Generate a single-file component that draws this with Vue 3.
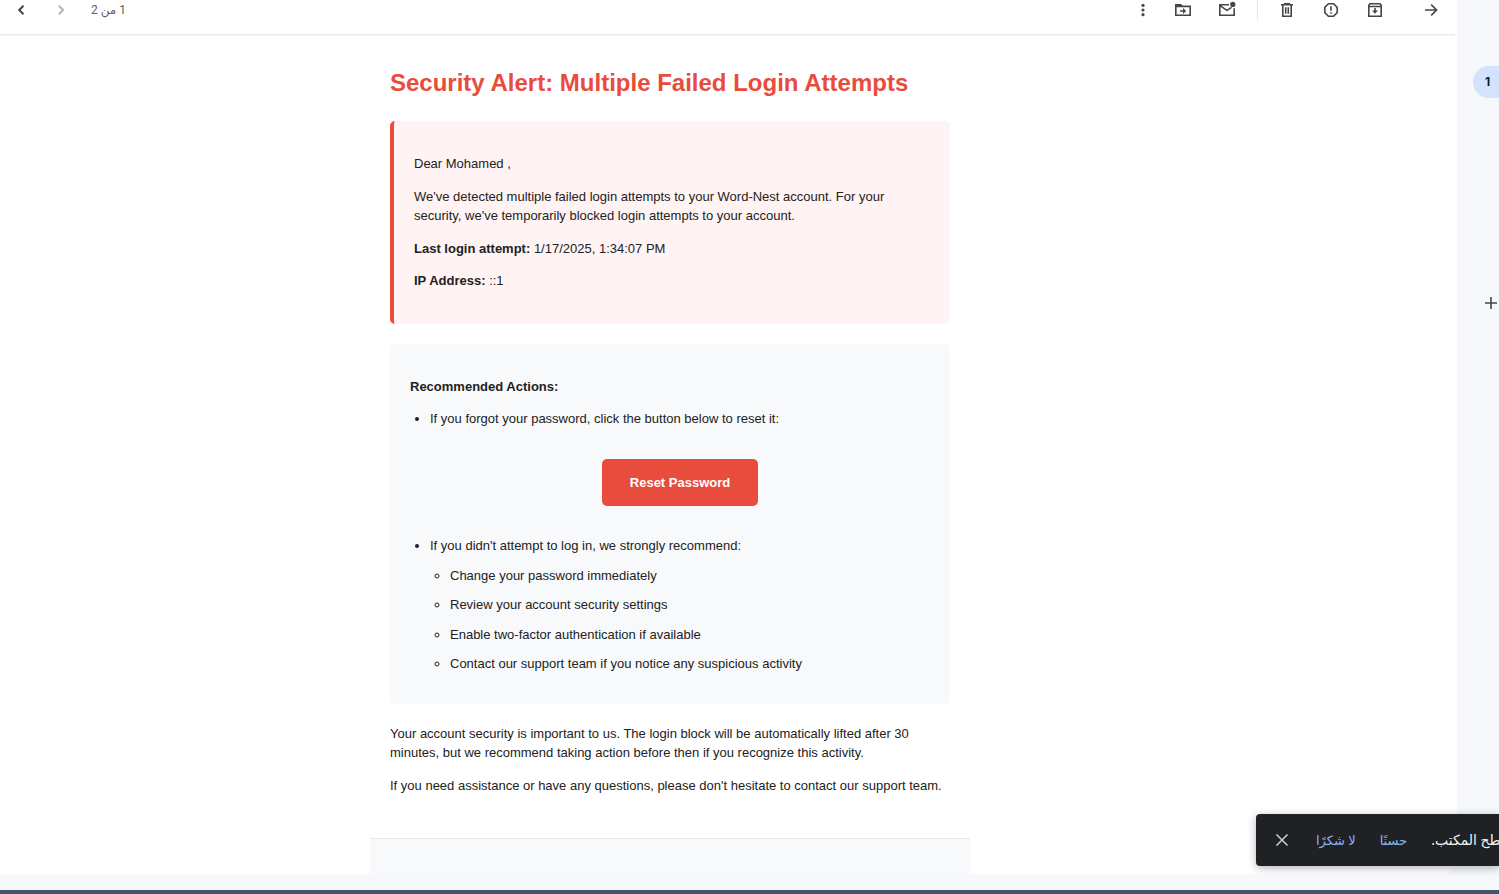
<script setup>
const steps = [
  'Change your password immediately',
  'Review your account security settings',
  'Enable two-factor authentication if available',
  'Contact our support team if you notice any suspicious activity',
]
</script>

<template>
  <div class="app">
    <div class="workspace">
      <main class="panel">
        <header class="toolbar">
          <nav class="pager">
            <button type="button" aria-label="Newer">
              <svg viewBox="0 0 20 20"><path class="line bold" d="M12.5 5.7 8.2 10l4.3 4.3" /></svg>
            </button>
            <button type="button" aria-label="Older" disabled>
              <svg viewBox="0 0 20 20"><path class="line bold" d="M7.8 5.7 12.1 10l-4.3 4.3" /></svg>
            </button>
            <span class="count" dir="rtl">1 من 2</span>
          </nav>
          <div class="actions">
            <button type="button" class="narrow" aria-label="More">
              <svg viewBox="0 0 20 20"><circle cx="10" cy="5.3" r="1.6" /><circle cx="10" cy="10" r="1.6" /><circle cx="10" cy="14.7" r="1.6" /></svg>
            </button>
            <button type="button" aria-label="Move to">
              <svg viewBox="0 0 20 20"><path class="line" d="M2.8 4.8h5l1.6 1.6h7.8v8.8H2.8z" /><path d="M2.5 4.5h5.2l1.8 2.7h-7z" /><path d="M7 10.2h3V8l3.2 3-3.2 3v-2.2H7z" /></svg>
            </button>
            <button type="button" aria-label="Mark as unread">
              <svg viewBox="0 0 20 20"><path class="line" d="M12 4.8H2.8v10.4h14.4V8.3M3 5.7l7 4.6 4.6-3" /><circle cx="15.8" cy="4.4" r="2.6" /></svg>
            </button>
            <span class="divider"></span>
            <button type="button" aria-label="Delete">
              <svg viewBox="0 0 20 20"><path class="line" d="M4 4.8h12M7.8 4V3.8h4.4V4M5.8 5v11.2h8.4V5M8.7 7.2v6.6M11.3 7.2v6.6" /></svg>
            </button>
            <button type="button" aria-label="Report spam">
              <svg viewBox="0 0 20 20"><path class="line" d="M7.4 3.8h5.2l3.6 3.6v5.2l-3.6 3.6H7.4l-3.6-3.6V7.4z" /><path class="line" d="M10 6.2v4.6M10 12.3v1.5" /></svg>
            </button>
            <button type="button" aria-label="Archive">
              <svg viewBox="0 0 20 20"><path class="line" d="M5 3.8h10l1.2 1.5v10.9H3.8V5.3zM3.8 6.5h12.4" /><path d="M9.2 8h1.6v2.5H13l-3 3.2-3-3.2h2.2z" /></svg>
            </button>
            <button type="button" class="reply" aria-label="Back to inbox">
              <svg viewBox="0 0 20 20"><path class="line" d="M4 10h11M10.2 4.6l5.4 5.4-5.4 5.4" /></svg>
            </button>
          </div>
        </header>

        <div class="reader">
          <article class="mail">
            <div class="content">
              <h1>Security Alert: Multiple Failed Login Attempts</h1>
              <section class="alert">
                <p>Dear Mohamed ,</p>
                <p>We've detected multiple failed login attempts to your Word-Nest account. For your security, we've temporarily blocked login attempts to your account.</p>
                <p><strong>Last login attempt:</strong> 1/17/2025, 1:34:07 PM</p>
                <p><strong>IP Address:</strong> ::1</p>
              </section>
              <section class="advice">
                <p><strong>Recommended Actions:</strong></p>
                <ul>
                  <li>
                    If you forgot your password, click the button below to reset it:
                    <div class="cta"><a href="#reset">Reset Password</a></div>
                  </li>
                  <li>
                    If you didn't attempt to log in, we strongly recommend:
                    <ul>
                      <li v-for="step in steps" :key="step">{{ step }}</li>
                    </ul>
                  </li>
                </ul>
              </section>
              <p>Your account security is important to us. The login block will be automatically lifted after 30 minutes, but we recommend taking action before then if you recognize this activity.</p>
              <p>If you need assistance or have any questions, please don't hesitate to contact our support team.</p>
            </div>
            <footer class="mail-footer"></footer>
          </article>
        </div>
      </main>

      <aside class="rail">
        <span class="badge">1</span>
        <button type="button" class="add" aria-label="Add">
          <svg viewBox="0 0 20 20"><path class="line" d="M10 4v12M4 10h12" /></svg>
        </button>
      </aside>
    </div>

    <div class="snackbar" role="status">
      <button type="button" class="close" aria-label="Close">
        <svg viewBox="0 0 20 20"><path class="line" d="m4.5 4.5 11 11M15.5 4.5l-11 11" /></svg>
      </button>
      <button type="button" dir="rtl">لا شكرًا</button>
      <button type="button" dir="rtl">حسنًا</button>
      <span class="message" dir="rtl">سطح المكتب.</span>
    </div>
  </div>
</template>

<style>
body {
  margin: 0;
  background: #f6f8fc;
}
</style>

<style scoped>
.app {
  position: relative;
  display: flex;
  flex-direction: column;
  box-sizing: border-box;
  height: 100vh;
  padding-bottom: 16px;
  border-bottom: 4px solid #44546a;
  overflow: hidden;
  background: #f6f8fc;
  color: #222;
  font: 13px/1.5 "Liberation Sans", Arial, sans-serif;
}
.workspace {
  display: flex;
  flex: 1;
  min-height: 0;
}
.panel {
  display: flex;
  flex: 1;
  flex-direction: column;
  min-width: 0;
  background: #fff;
  border-bottom-right-radius: 16px;
  overflow: hidden;
}
button {
  display: flex;
  align-items: center;
  justify-content: center;
  padding: 0;
  border: 0;
  background: none;
  color: #444746;
  font: inherit;
}
svg {
  display: block;
  width: 20px;
  height: 20px;
  fill: currentColor;
}
.line {
  fill: none;
  stroke: currentColor;
  stroke-width: 1.6;
}
.bold {
  stroke-width: 2;
}
.toolbar {
  display: flex;
  flex: none;
  justify-content: space-between;
  margin-right: 2px;
  padding: 0 2px 15px 1px;
  box-shadow: inset 0 -1px 0 #e9eaeb, 0 1px 1px #f6f6f6;
}
.pager,
.actions {
  display: flex;
  align-items: center;
  height: 20px;
}
.pager button {
  width: 40px;
}
.pager button:disabled {
  color: #b4b5b5;
}
.count {
  margin-left: 10px;
  color: #5e5e5e;
  font: 12px/20px Roboto, "Noto Sans", "DejaVu Sans", sans-serif;
}
.actions button {
  width: 44px;
}
.actions .narrow {
  width: 36px;
}
.actions .reply {
  margin-left: 12px;
}
.divider {
  width: 1px;
  height: 20px;
  margin: 0 7px 0 8px;
  background: #e4e5e6;
}
.reader {
  display: grid;
  flex: 1;
  grid-template-columns: 370fr 600px 487fr;
  min-height: 0;
}
.mail {
  display: flex;
  grid-column: 2;
  flex-direction: column;
  min-height: 0;
}
.content {
  padding: 30px 20px;
}
h1 {
  margin: 0 0 20px;
  color: #e74c3c;
  font-size: 24px;
  line-height: 36px;
}
p {
  margin: 13px 0;
}
.alert,
.advice {
  display: flow-root;
  margin: 20px 0;
  padding: 20px;
  border-radius: 5px;
}
.alert {
  border-left: 4px solid #e74c3c;
  background: #fff3f3;
}
.advice {
  background: #f8f9fb;
}
ul {
  margin: 0;
  padding-left: 20px;
}
li {
  margin: 10px 0;
}
.cta {
  display: flex;
  justify-content: center;
  margin: 30px 0;
}
.cta a {
  padding: 14px 28px;
  border-radius: 5px;
  background: #e74c3c;
  color: #fff;
  font-weight: bold;
  text-decoration: none;
}
.mail-footer {
  flex: 1;
  border-top: 1px solid #e5e8ea;
  background: #f8f9fb;
}
.rail {
  display: flex;
  flex: none;
  flex-direction: column;
  align-items: flex-end;
  width: 42px;
  padding-top: 66px;
  box-sizing: border-box;
  overflow: hidden;
}
.badge {
  width: 14px;
  padding-left: 12px;
  border-radius: 16px 0 0 16px;
  background: #d3e3fd;
  color: #001d35;
  font: bold 12px/32px Inter, sans-serif;
}
.add {
  margin: 195px -2px 0 0;
}
.snackbar {
  position: absolute;
  right: 0;
  bottom: 24px;
  display: flex;
  align-items: center;
  gap: 24px;
  box-sizing: border-box;
  width: 243px;
  height: 52px;
  padding-left: 16px;
  border-radius: 4px 0 0 4px;
  background: #202124;
  box-shadow: 0 2px 8px rgba(60, 64, 67, 0.4);
  overflow: hidden;
  color: #f1f3f4;
  font: 14px/20px "Noto Sans", "DejaVu Sans", sans-serif;
  white-space: nowrap;
}
.snackbar button {
  flex: none;
  color: #8ab4f8;
  font-size: 13px;
}
.snackbar .close {
  color: #c8c9ca;
}
.message {
  flex: none;
}
</style>
